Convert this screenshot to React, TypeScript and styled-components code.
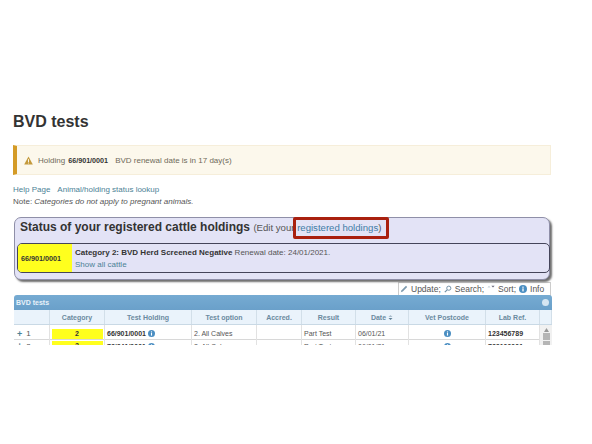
import styled, { createGlobalStyle } from 'styled-components';

const GlobalStyle = createGlobalStyle`
  html, body {
    margin: 0;
    padding: 0;
    background: #fff;
  }
  body {
    font-family: 'Liberation Sans', Arial, sans-serif;
    color: #444;
  }
`;

const columns = '36px 55px 87px 65px 45px 54px 53px 77px 54px 12px';

const Page = styled.div`
  width: 592px;
  height: 444px;
  box-sizing: border-box;
  padding: 112px 41px 0 13px;
  overflow: hidden;
`;

const Title = styled.h1`
  margin: 0;
  font-size: 16px;
  line-height: 19px;
  font-weight: 700;
  color: #333;
`;

const Alert = styled.div`
  display: flex;
  align-items: center;
  height: 30px;
  margin-top: 14px;
  padding-left: 7px;
  box-sizing: border-box;
  background: #fcf8ec;
  border: 1px solid #f6eeda;
  border-left: 4px solid #d49b26;
  font-size: 8px;
  color: #6f6a5a;
`;

const AlertHolding = styled.b`
  margin: 0 7px 0 3px;
  font-size: 7.2px;
  color: #333;
`;

const AlertIcon = styled.svg`
  width: 9px;
  height: 9px;
  margin-right: 5px;
`;

const LinkRow = styled.div`
  display: flex;
  gap: 7px;
  margin-top: 9px;
  font-size: 8px;
  line-height: 12px;
`;

const TextLink = styled.a`
  color: #4c8296;
`;

const Note = styled.div`
  font-size: 8px;
  line-height: 12px;
  color: #555;
`;

const NoteText = styled.i`
  font-style: italic;
`;

const Panel = styled.section`
  position: relative;
  width: 536px;
  height: 63px;
  margin: 9px 0 0 1px;
  box-sizing: border-box;
  padding: 0 0 0 5px;
  background: #e3e3f6;
  border: 1px solid #8f8fa8;
  border-radius: 7px;
  box-shadow: 2px 2px 2px #6f6f6f;
`;

const PanelTitle = styled.div`
  height: 25px;
  font-size: 12px;
  line-height: 18px;
  font-weight: 700;
  color: #333;
`;

const PanelEdit = styled.span`
  font-size: 9.6px;
  font-weight: 400;
  color: #555;
`;

const PanelLink = styled.a`
  color: #3f7da6;
`;

const Highlight = styled.div`
  position: absolute;
  top: -1px;
  left: 278px;
  width: 96px;
  height: 22px;
  box-sizing: border-box;
  border: 3px solid #a9200f;
  border-radius: 2px;
`;

const HoldingBox = styled.div`
  display: flex;
  width: 533px;
  height: 30px;
  margin-left: -3px;
  box-sizing: border-box;
  border: 1px solid #45455a;
  border-radius: 5px;
  overflow: hidden;
`;

const HoldingCode = styled.div`
  display: flex;
  align-items: center;
  width: 54px;
  padding-left: 3px;
  box-sizing: border-box;
  background: #ffff1e;
  font-size: 7.2px;
  font-weight: 700;
  color: #333;
`;

const HoldingInfo = styled.div`
  padding: 3px 0 0 3px;
  font-size: 8px;
  line-height: 12px;
  color: #555;
`;

const Strong = styled.b`
  color: #333;
`;

const Toolbar = styled.div`
  display: flex;
  align-items: center;
  gap: 3px;
  width: 153px;
  height: 14px;
  margin: 2px 0 0 385px;
  padding-left: 1px;
  box-sizing: border-box;
  border: 1px solid #ccc;
  background: #fff;
  font-size: 8.5px;
  color: #555;
`;

const ToolIcon = styled.svg`
  width: 8px;
  height: 8px;
  flex: none;
`;

const TableWrap = styled.div`
  width: 538px;
  height: 50px;
  margin: -1px 0 0 1px;
  overflow: hidden;
  border-radius: 3px 3px 0 0;
`;

const TableBar = styled.div`
  display: flex;
  align-items: center;
  justify-content: space-between;
  height: 15px;
  padding: 0 3px 0 2px;
  background: linear-gradient(#76abd2, #6aa0ca);
  font-size: 7px;
  font-weight: 700;
  color: #e8f2fa;
`;

const BarButton = styled.span`
  width: 7px;
  height: 7px;
  border-radius: 50%;
  background: #d6e6f2;
`;

const HeaderRow = styled.div`
  display: grid;
  grid-template-columns: ${columns};
  height: 15px;
  background: #eaf3fb;
  border-bottom: 1px solid #c9d9e5;
  box-sizing: border-box;
`;

const HeaderCell = styled.div`
  display: flex;
  align-items: center;
  justify-content: center;
  gap: 2px;
  border-right: 1px solid #d2dfe9;
  font-size: 7px;
  font-weight: 700;
  color: #6a8a9f;
`;

const DataRow = styled.div`
  display: grid;
  grid-template-columns: ${columns};
  height: 15px;
  box-sizing: border-box;
  border-bottom: 1px solid #d8d8d8;
  background: #fff;
`;

const Cell = styled.div<{ $center?: boolean; $bold?: boolean }>`
  display: flex;
  align-items: center;
  justify-content: ${(p) => (p.$center ? 'center' : 'flex-start')};
  gap: 2px;
  padding-left: ${(p) => (p.$center ? 0 : 2)}px;
  padding-bottom: 2px;
  border-right: 1px solid #e2e2e2;
  overflow: hidden;
  white-space: nowrap;
  font-size: 7px;
  font-weight: ${(p) => (p.$bold ? 700 : 400)};
  color: ${(p) => (p.$bold ? '#333' : '#555')};
`;

const IndexCell = styled(Cell)`
  padding-left: 3px;
  gap: 4px;
  font-size: 8px;
`;

const Plus = styled.span`
  font-size: 9px;
  font-weight: 700;
  color: #4c8296;
`;

const CategoryChip = styled.span`
  display: block;
  width: 51px;
  height: 10px;
  line-height: 10px;
  text-align: center;
  background: #ffff1e;
  font-weight: 700;
  color: #333;
`;

const Scroller = styled.div`
  background: #f1f1f1;
`;

const ScrollArrow = styled.svg`
  display: block;
  width: 5px;
  height: 4px;
  margin: 3px 0 0 4px;
`;

const Thumb = styled.div`
  width: 7px;
  height: 11px;
  margin: 1px 0 0 3px;
  background: #b5b5b5;
`;

const InfoIcon = ({ size = 7 }: { size?: number }) => (
  <svg width={size} height={size} viewBox="0 0 10 10" style={{ flex: 'none' }}>
    <circle cx="5" cy="5" r="5" fill="#4a8ec2" />
    <rect x="4.2" y="4.2" width="1.6" height="3.8" fill="#fff" />
    <rect x="4.2" y="2" width="1.6" height="1.5" fill="#fff" />
  </svg>
);

const App = () => (
  <Page>
    <GlobalStyle />
    <Title>BVD tests</Title>
    <Alert>
      <AlertIcon viewBox="0 0 10 10">
        <path d="M5 0.5 L9.8 9.5 H0.2 Z" fill="#c49a3c" />
        <rect x="4.5" y="3.5" width="1" height="3.2" fill="#fff" />
        <rect x="4.5" y="7.3" width="1" height="1" fill="#fff" />
      </AlertIcon>
      Holding <AlertHolding>66/901/0001</AlertHolding> BVD renewal date is in 17 day(s)
    </Alert>
    <LinkRow>
      <TextLink>Help Page</TextLink>
      <TextLink>Animal/holding status lookup</TextLink>
    </LinkRow>
    <Note>
      Note: <NoteText>Categories do not apply to pregnant animals.</NoteText>
    </Note>
    <Panel>
      <PanelTitle>
        Status of your registered cattle holdings{' '}
        <PanelEdit>
          (Edit your <PanelLink>registered holdings</PanelLink>)
        </PanelEdit>
      </PanelTitle>
      <Highlight />
      <HoldingBox>
        <HoldingCode>66/901/0001</HoldingCode>
        <HoldingInfo>
          <Strong>Category 2: BVD Herd Screened Negative</Strong> Renewal date: 24/01/2021.
          <br />
          <TextLink>Show all cattle</TextLink>
        </HoldingInfo>
      </HoldingBox>
    </Panel>
    <Toolbar>
      <ToolIcon viewBox="0 0 10 10">
        <path d="M1 9 L2 6.5 L7.5 1 L9 2.5 L3.5 8 Z" fill="#7d9aae" />
      </ToolIcon>
      Update;
      <ToolIcon viewBox="0 0 10 10">
        <circle cx="6" cy="4" r="2.6" fill="none" stroke="#6f8ea4" strokeWidth="1.2" />
        <path d="M4 6 L1 9" stroke="#6f8ea4" strokeWidth="1.4" />
      </ToolIcon>
      Search;
      <ToolIcon viewBox="0 0 10 10">
        <path d="M0.5 3 L2.5 1 L4.5 3 Z" fill="#c8d4dc" />
        <path d="M5.5 1 H9.5 L7.5 3 Z" fill="#667" />
      </ToolIcon>
      Sort;
      <InfoIcon size={8} />
      Info
    </Toolbar>
    <TableWrap>
      <TableBar>
        BVD tests
        <BarButton />
      </TableBar>
      <HeaderRow>
        <HeaderCell />
        <HeaderCell>Category</HeaderCell>
        <HeaderCell>Test Holding</HeaderCell>
        <HeaderCell>Test option</HeaderCell>
        <HeaderCell>Accred.</HeaderCell>
        <HeaderCell>Result</HeaderCell>
        <HeaderCell>
          Date
          <svg width="5" height="7" viewBox="0 0 5 7">
            <path d="M0.5 3 L2.5 1 L4.5 3 Z" fill="#a9bccb" />
            <path d="M0.5 4 H4.5 L2.5 6 Z" fill="#5f7f96" />
          </svg>
        </HeaderCell>
        <HeaderCell>Vet Postcode</HeaderCell>
        <HeaderCell>Lab Ref.</HeaderCell>
        <HeaderCell />
      </HeaderRow>
      <DataRow>
        <IndexCell>
          <Plus>+</Plus> 1
        </IndexCell>
        <Cell $center>
          <CategoryChip>2</CategoryChip>
        </Cell>
        <Cell $bold>
          66/901/0001 <InfoIcon />
        </Cell>
        <Cell>2. All Calves</Cell>
        <Cell />
        <Cell>Part Test</Cell>
        <Cell>06/01/21</Cell>
        <Cell $center>
          <InfoIcon />
        </Cell>
        <Cell $bold>123456789</Cell>
        <Scroller>
          <ScrollArrow viewBox="0 0 5 4">
            <path d="M0 4 L2.5 0 L5 4 Z" fill="#999" />
          </ScrollArrow>
          <Thumb />
        </Scroller>
      </DataRow>
      <DataRow>
        <IndexCell>
          <Plus>+</Plus> 2
        </IndexCell>
        <Cell $center>
          <CategoryChip>2</CategoryChip>
        </Cell>
        <Cell $bold>
          72/341/0001 <InfoIcon />
        </Cell>
        <Cell>2. All Calves</Cell>
        <Cell />
        <Cell>Part Test</Cell>
        <Cell>06/01/21</Cell>
        <Cell $center>
          <InfoIcon />
        </Cell>
        <Cell $bold>723100001</Cell>
        <Scroller>
          <Thumb />
        </Scroller>
      </DataRow>
    </TableWrap>
  </Page>
);

export default App;
